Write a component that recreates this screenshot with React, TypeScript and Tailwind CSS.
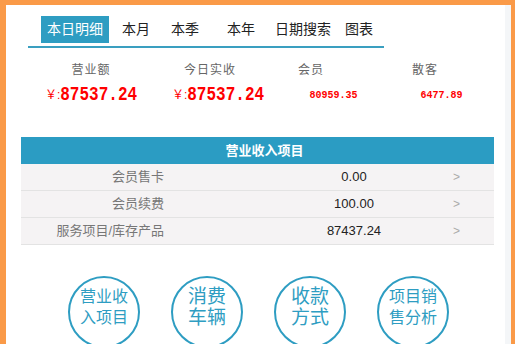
const tabs = [
  { label: '本月', ml: 'ml-[13px]' },
  { label: '本季', ml: 'ml-[21px]' },
  { label: '本年', ml: 'ml-[28px]' },
  { label: '日期搜索', ml: 'ml-[20px]' },
  { label: '图表', ml: 'ml-[14px]' },
]

const rows = [
  { name: '会员售卡', value: '0.00' },
  { name: '会员续费', value: '100.00' },
  { name: '服务项目/库存产品', value: '87437.24' },
]

const circles = [
  { lines: ['营业收', '入项目'], size: 'text-[16px]' },
  { lines: ['消费', '车辆'], size: 'text-[19px]' },
  { lines: ['收款', '方式'], size: 'text-[19px]' },
  { lines: ['项目销', '售分析'], size: 'text-[16px]' },
]

export default function App() {
  return (
    <div className="w-[515px] h-[344px] overflow-hidden bg-[#fa9a48] pt-[5px] pl-[6px] pr-[4px] font-['Liberation_Sans','Noto_Sans_CJK_SC',sans-serif]">
      <div className="flex h-full bg-white">
        <div className="w-[499px] h-full">

          {/* Tabs */}
          <div className="ml-[22px] mt-[11px] w-[356px] pb-[3px] border-b-2 border-[#3a9fc0]">
            <div className="flex items-center h-[27px] text-[14px] text-[#222]">
              <div className="ml-[13px] w-[68px] h-[27px] bg-[#2e9dc2] text-white flex items-center justify-center">本日明细</div>
              {tabs.map((t) => (
                <div key={t.label} className={t.ml}>{t.label}</div>
              ))}
            </div>
          </div>

          {/* Summary */}
          <div className="flex mt-[14px] text-[12px] leading-[16px] text-[#666] tracking-[1px]">
            <div className="ml-[26px] w-[118px] text-center">营业额</div>
            <div className="w-[120px] text-center">今日实收</div>
            <div className="w-[82px] text-center">会员</div>
            <div className="w-[146px] text-center">散客</div>
          </div>
          <div className="flex items-center mt-[5px] h-[24px] text-[#f00]">
            <div className="ml-[24px] w-[122px] flex items-baseline justify-center">
              <span className="text-[12px]">￥:</span>
              <span className="inline-block scale-y-125 font-['Liberation_Mono',monospace] font-bold text-[16px]">87537.24</span>
            </div>
            <div className="w-[132px] flex items-baseline justify-center">
              <span className="text-[12px]">￥:</span>
              <span className="inline-block scale-y-125 font-['Liberation_Mono',monospace] font-bold text-[16px]">87537.24</span>
            </div>
            <div className="w-[99px] text-center font-['Liberation_Mono',monospace] font-bold text-[10px]">80959.35</div>
            <div className="w-[117px] text-center font-['Liberation_Mono',monospace] font-bold text-[10px]">6477.89</div>
          </div>

          {/* Income table */}
          <div className="ml-[15px] mt-[30px] w-[473px]">
            <div className="h-[27px] bg-[#2b9cc3] text-white font-bold text-[13px] flex items-center justify-center pl-[14px]">营业收入项目</div>
            {rows.map((r) => (
              <div key={r.name} className="flex items-center h-[27px] bg-[#f5f3f4] border-b border-[#e3e3e3] text-[13px]">
                <div className="w-[143px] text-right text-[#777]">{r.name}</div>
                <div className="w-[110px]" />
                <div className="w-[160px] text-center text-[#222]">{r.value}</div>
                <div className="ml-[19px] text-[12px] text-[#aaa]">&gt;</div>
              </div>
            ))}
          </div>

          {/* Shortcuts */}
          <div className="flex gap-[31px] ml-[62px] mt-[31px]">
            {circles.map((c) => (
              <div key={c.lines[0]} className={`w-[72px] h-[72px] shrink-0 rounded-full border-[2.5px] border-[#2e9dc2] flex flex-col items-center pt-[8px] leading-[21px] text-[#2e9dc2] ${c.size}`}>
                {c.lines.map((l) => (
                  <div key={l}>{l}</div>
                ))}
              </div>
            ))}
          </div>
        </div>
        <div className="w-[6px] h-full bg-[#f4f6f8]" />
      </div>
    </div>
  )
}
